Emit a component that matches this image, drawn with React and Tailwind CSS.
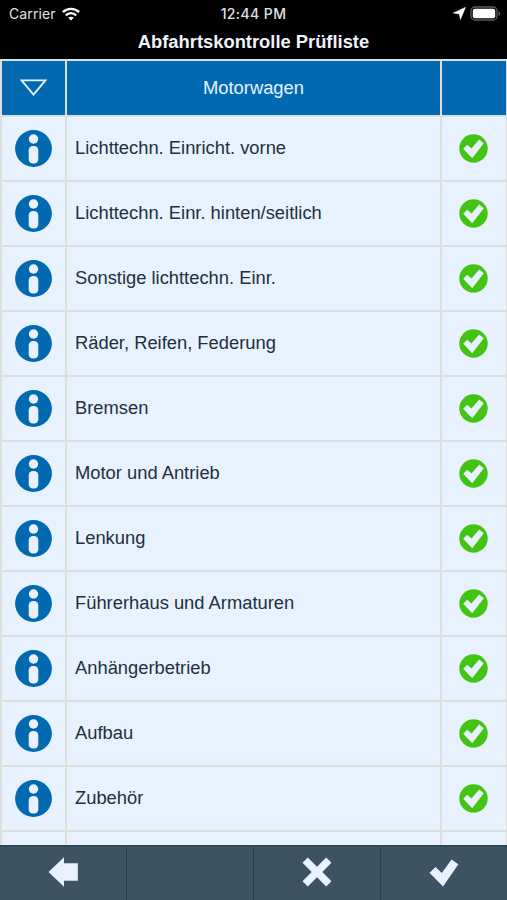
import { useState } from 'react';

const ITEMS = [
  'Lichttechn. Einricht. vorne',
  'Lichttechn. Einr. hinten/seitlich',
  'Sonstige lichttechn. Einr.',
  'Räder, Reifen, Federung',
  'Bremsen',
  'Motor und Antrieb',
  'Lenkung',
  'Führerhaus und Armaturen',
  'Anhängerbetrieb',
  'Aufbau',
  'Zubehör'
];

const InfoIcon = () => (
  <svg width="37" height="37" viewBox="0 0 37 37">
    <circle cx="18.5" cy="18.5" r="18.4" fill="#0069b0" />
    <circle cx="18.5" cy="9" r="4.7" fill="#e8f2ff" />
    <rect x="13.7" y="16" width="9.6" height="17.6" rx="4.3" fill="#e8f2ff" />
  </svg>
);

const CheckIcon = () => (
  <svg width="29" height="29" viewBox="0 0 29 29">
    <circle cx="14.5" cy="14.5" r="14.2" fill="#43c413" />
    <path d="M4.2 14.8L8.2 10.8L12.5 14.4L20.2 5.6L24.8 9.2L13.2 24.2Z" fill="#e8f2ff" />
  </svg>
);

const StatusBar = () => (
  <div className="relative flex h-7 items-center justify-between pb-px pl-[9px] pr-[6px] font-['Inter',sans-serif] text-[14px] text-[#e2e2e2]">
    <div className="flex items-center gap-[6px]">
      <span className="tracking-[0.1px]">Carrier</span>
      <svg width="18" height="14" viewBox="0 0 18 14" fill="none" stroke="#fff" strokeWidth="2.4">
        <path d="M0.9 5.2C5.3 0.7 12.7 0.7 17.1 5.2" />
        <path d="M3.8 8.3C6.7 5.4 11.3 5.4 14.2 8.3" />
        <path d="M9 13.6L6.2 10.7C7.8 9.3 10.2 9.3 11.8 10.7Z" fill="#fff" stroke="none" />
      </svg>
    </div>
    <span className="absolute left-1/2 -translate-x-1/2 whitespace-nowrap font-medium tracking-[0.4px]">12:44 PM</span>
    <div className="flex items-center gap-[4px]">
      <svg width="13" height="13" viewBox="0 0 13 13">
        <path d="M12.4 0.4L7.4 12.4L6.4 7L0.4 6Z" fill="#fff" stroke="#fff" strokeWidth="0.6" strokeLinejoin="round" />
      </svg>
      <svg width="31" height="15" viewBox="0 0 31 15">
        <rect x="1" y="1" width="26" height="13" rx="3.8" fill="none" stroke="#5c5c5e" strokeWidth="1.3" />
        <rect x="2.8" y="2.8" width="22.4" height="9.4" rx="2" fill="#fff" />
        <path d="M28.5 5.2C30.8 6 30.8 9 28.5 9.8Z" fill="#5c5c5e" />
      </svg>
    </div>
  </div>
);

const App = () => {
  const [open, setOpen] = useState(true);

  return (
    <div className="flex h-[900px] w-full flex-col overflow-hidden bg-black font-['Liberation_Sans',Arial,sans-serif]">
      <header className="h-[59px] shrink-0">
        <StatusBar />
        <h1 className="text-center text-[18.35px] font-bold leading-[28px] text-[#eef3fb]">
          Abfahrtskontrolle Prüfliste
        </h1>
      </header>

      {/* Checklist */}
      <main className="min-h-0 flex-1 overflow-hidden bg-[#dddfde] pl-[2px] pr-px pt-[2px]">
        <div className="grid grid-cols-[63px_1fr_64px] gap-[2px]">
          <button
            type="button"
            onClick={() => setOpen(!open)}
            className="flex h-[54px] items-center justify-center bg-[#0069b0]"
          >
            <svg width="27" height="18" viewBox="0 0 27 18">
              <path d="M1.6 1.4H25.4L13.5 15.6Z" fill="none" stroke="#e8f2ff" strokeWidth="1.8" />
            </svg>
          </button>
          <div className="flex h-[54px] items-center justify-center bg-[#0069b0] text-[18.35px] text-[#e8f2ff]">
            Motorwagen
          </div>
          <div className="h-[54px] bg-[#0069b0]" />

          {open && ITEMS.map((item) => (
            <div key={item} className="contents">
              <div className="flex h-[63px] items-center justify-center bg-[#e8f2ff]">
                <InfoIcon />
              </div>
              <div className="flex h-[63px] items-center bg-[#e8f2ff] pb-[2px] pl-2 text-[18.35px] text-[#22303b]">
                {item}
              </div>
              <div className="flex h-[63px] items-center bg-[#e8f2ff] pl-[17px]">
                <CheckIcon />
              </div>
            </div>
          ))}

          <div className="h-[63px] bg-[#e8f2ff]" />
          <div className="h-[63px] bg-[#e8f2ff]" />
          <div className="h-[63px] bg-[#e8f2ff]" />
        </div>
      </main>

      {/* Toolbar */}
      <footer className="grid h-[55px] shrink-0 grid-cols-[127px_127px_127px_1fr] divide-x divide-[#263f4f] border-t-2 border-[#2f4858] bg-[#3c5364]">
        <button type="button" className="flex items-center justify-center pb-[3px]">
          <svg width="30" height="30" viewBox="0 0 30 30">
            <path d="M0.5 15L16 0.3V6.3H29.8V23.7H16V29.7Z" fill="#e8f2ff" />
          </svg>
        </button>
        <div />
        <button type="button" className="flex items-center justify-center pb-[3px]">
          <svg width="30" height="30" viewBox="0 0 30 30">
            <path d="M5.8 0.5L15 9.7L24.2 0.5L29.5 5.8L20.3 15L29.5 24.2L24.2 29.5L15 20.3L5.8 29.5L0.5 24.2L9.7 15L0.5 5.8Z" fill="#e8f2ff" />
          </svg>
        </button>
        <button type="button" className="flex items-center justify-center pb-[3px]">
          <svg width="30" height="30" viewBox="0 0 30 30">
            <path d="M0.5 15.8L6.5 9.9L12.8 16L22.6 2.6L29.4 7.2L14 29.4Z" fill="#e8f2ff" />
          </svg>
        </button>
      </footer>
    </div>
  );
};

export default App;
